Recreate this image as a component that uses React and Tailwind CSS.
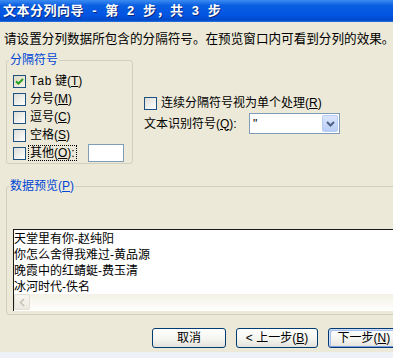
import React from "react";

const font = "font-['Liberation_Sans','Noto_Sans_CJK_SC',sans-serif]";

function CheckBox({ checked, hot }) {
    return (
        <div
            className={`w-[13px] h-[13px] shrink-0 border border-[#1C5180] flex items-center justify-center ${
                hot
                    ? "bg-[linear-gradient(135deg,#DEDAC0,#F6F4E8)]"
                    : "bg-[linear-gradient(135deg,#DCDCD7,#FFFFFF)]"
            }`}
        >
            {checked && (
                <svg width="9" height="9" viewBox="0 0 9 9">
                    <path
                        d="M1 4.2 L3.4 6.6 L8 2"
                        fill="none"
                        stroke="#21A121"
                        strokeWidth="2"
                    />
                </svg>
            )}
        </div>
    );
}

function Key({ k }) {
    return (
        <span>
            (<span className="underline underline-offset-1">{k}</span>)
        </span>
    );
}

function Row({ checked, hot, children }) {
    return (
        <div className="h-[18px] flex items-center">
            <CheckBox checked={checked} hot={hot} />
            <span className="ml-[4px] text-[12px] leading-[14px]">{children}</span>
        </div>
    );
}

function Button({ children, isDefault }) {
    return (
        <button
            className={`w-full h-[20px] rounded-[3px] border border-[#003C74] bg-[linear-gradient(#FFFFFF,#F3F3EF_60%,#E3E2DA)] text-[12px] leading-[14px] text-black flex items-center justify-center whitespace-pre ${
                isDefault
                    ? "shadow-[inset_1px_1px_0_#CEDCF8,inset_2px_2px_0_#A8C0EF,inset_-1px_-1px_0_#7C9BE0]"
                    : ""
            }`}
        >
            {children}
        </button>
    );
}

export default function App() {
    return (
        <div className={`w-[393px] h-[358px] overflow-hidden bg-[#ECE9D8] text-black ${font}`}>
            <div className="w-[424px] flex flex-col h-full">
                {/* title bar */}
                <div className="h-[22px] shrink-0 flex items-center pl-[3px] bg-[linear-gradient(#3C8CF3,#0A5EE0_25%,#0054E3_70%,#0049C8_92%,#2E78E6)]">
                    <span className="text-white font-bold text-[13px] tracking-[0.5px] whitespace-pre [text-shadow:1px_1px_#0A2A80]">
                        文本分列向导  -  第  2  步，共  3  步
                    </span>
                </div>

                <div className="pt-[9px] pl-[4px] text-[12.6px] leading-[16px] whitespace-nowrap">
                    请设置分列数据所包含的分隔符号。在预览窗口内可看到分列的效果。
                </div>

                {/* top row */}
                <div className="flex items-start mt-[6px]">
                    <fieldset className="ml-[6px] w-[127px] border border-[#D0D0BF] rounded-[3px] px-[6px] pb-[1px]">
                        <legend className="ml-[-4px] px-[1px] text-[12px] leading-[14px] text-[#0046D5]">
                            分隔符号
                        </legend>
                        <div className="pt-[5px] flex flex-col">
                            <Row checked hot>
                                <span className="font-['Liberation_Mono',monospace]">Tab</span> 键<Key k="T" />
                            </Row>
                            <Row>
                                分号<Key k="M" />
                            </Row>
                            <Row>
                                逗号<Key k="C" />
                            </Row>
                            <Row>
                                空格<Key k="S" />
                            </Row>
                            <div className="h-[18px] flex items-center">
                                <CheckBox />
                                <span className="ml-[3px] px-[1px] text-[12px] leading-[14px] outline outline-1 outline-dotted outline-black">
                                    其他<Key k="O" />:
                                </span>
                                <div className="ml-[12px] w-[36px] h-[18px] border border-[#7F9DB9] bg-white" />
                            </div>
                        </div>
                    </fieldset>

                    <div className="ml-[11px] flex flex-col">
                        <div className="mt-[41px] h-[18px] flex items-center">
                            <CheckBox />
                            <span className="ml-[4px] text-[12px] leading-[14px]">
                                连续分隔符号视为单个处理<Key k="R" />
                            </span>
                        </div>
                        <div className="mt-[1px] h-[21px] flex items-center">
                            <span className="w-[105px] text-[12px] leading-[14px]">
                                文本识别符号<Key k="Q" />:
                            </span>
                            <div className="w-[91px] h-[21px] border border-[#7F9DB9] bg-white flex items-center">
                                <span className="pl-[3px] text-[12px] leading-[14px]">"</span>
                                <div className="ml-auto mr-[1px] w-[16px] h-[17px] rounded-[2px] border border-[#B8CCF4] bg-[linear-gradient(#DCE6FC,#B9CDF6)] flex items-center justify-center">
                                    <svg width="9" height="6" viewBox="0 0 9 6">
                                        <path d="M1 1 L4.5 4.5 L8 1" fill="none" stroke="#4D6185" strokeWidth="2" />
                                    </svg>
                                </div>
                            </div>
                        </div>
                    </div>
                </div>

                {/* preview */}
                <fieldset className="mt-[15px] ml-[6px] w-[412px] border border-[#D0D0BF] rounded-[3px] pl-[6px] pb-[3px]">
                    <legend className="ml-[-4px] px-[1px] text-[12px] leading-[14px] text-[#0046D5]">
                        数据预览<Key k="P" />
                    </legend>
                    <div className="mt-[36px] h-[82px] border-t border-l border-[#1A1A1A] bg-white flex flex-col">
                        <div className="h-[64px] overflow-hidden pt-[1px] text-[12px] leading-[16px]">
                            <div>天堂里有你-赵纯阳</div>
                            <div>你怎么舍得我难过-黄品源</div>
                            <div>晚霞中的红蜻蜓-费玉清</div>
                            <div>冰河时代-佚名</div>
                        </div>
                        <div className="h-[16px] flex bg-[linear-gradient(#F3F1E7,#FEFEFB)]">
                            <div className="w-[16px] h-[16px] rounded-[2px] border border-[#E2E0D6] bg-[linear-gradient(#F7F6F0,#EBE9E0)] flex items-center justify-center">
                                <svg width="6" height="9" viewBox="0 0 6 9">
                                    <path d="M5 1 L1.5 4.5 L5 8" fill="none" stroke="#C6C3B6" strokeWidth="1.6" />
                                </svg>
                            </div>
                        </div>
                    </div>
                </fieldset>

                {/* buttons */}
                <div className="mt-[13px] pl-[152px] flex gap-[10px]">
                    <div className="w-[74px]">
                        <Button>取消</Button>
                    </div>
                    <div className="w-[82px]">
                        <Button>
                            {"< 上一步"}
                            <Key k="B" />
                        </Button>
                    </div>
                    <div className="w-[82px]">
                        <Button isDefault>
                            下一步<Key k="N" />
                            {" >"}
                        </Button>
                    </div>
                </div>

                <div className="mt-auto h-[6px] bg-[#EEF1F6]" />
            </div>
        </div>
    );
}
